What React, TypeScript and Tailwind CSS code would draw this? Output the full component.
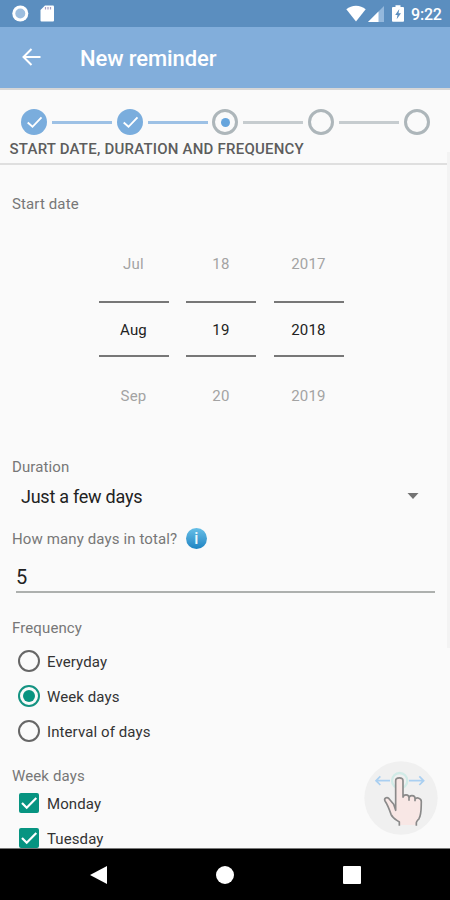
import type { ReactNode } from "react";

function StatusBar() {
  return (
    <div className="flex h-[27px] items-center bg-[#5b8ebf] pl-3 pr-2 text-white">
      <svg width="17" height="17" viewBox="0 0 17 17">
        <circle cx="8.3" cy="8.5" r="8" fill="#fff" />
        <circle cx="8.3" cy="8.5" r="5" fill="#9dbedf" />
      </svg>
      <svg width="14" height="17" viewBox="0 0 14 17" className="ml-[10.5px]">
        <path d="M5 .5h8q1 0 1 1v14q0 1-1 1H1.500q-1 0-1-1V5z" fill="#fff" />
        <path d="M5.500 2v2.500M8 2v2.500M10.500 2v2.500" stroke="#a79fc4" strokeWidth="1.200" />
      </svg>
      <svg width="20" height="17" viewBox="0 0 20 17" className="ml-auto">
        <path d="M.3 4.300Q4.500.8 10 .8t9.700 3.500L10 16.500z" fill="#fff" />
      </svg>
      <svg width="16" height="16" viewBox="0 0 16 16" className="ml-0.5">
        <path d="M0 16L16 0v16z" fill="#94b8dc" />
        <path d="M0 16L10.500 5.500V16z" fill="#fff" />
      </svg>
      <svg width="12" height="17" viewBox="0 0 12 17" className="ml-[8.500px]">
        <path d="M3.500.3h5v1.700H11q1 0 1 1v13q0 .8-1 .8H1q-1 0-1-.8V3q0-1 1-1h2.500z" fill="#fff" />
        <path d="M7.300 4L3.200 10h2.300l-.8 4.200L9 8.300H6.500z" fill="#5b8ebf" />
      </svg>
      <span className="ml-[7px] w-[31px] whitespace-nowrap pt-0.5 text-[16px] font-medium leading-none tracking-[-0.2px]">9:22</span>
    </div>
  );
}

function Stepper() {
  const steps = ["done", "done", "current", "todo", "todo"];
  return (
    <div className="flex h-[26px] items-center gap-[4.800px] pl-[21.200px]">
      {steps.map((state, i) => (
        <div key={i} className="flex items-center gap-[4.800px]">
          {state === "done" ? (
            <div className="size-[26px] rounded-full bg-[#7aaddd]">
              <svg viewBox="0 0 26 26" className="size-[26px]" fill="none" stroke="#fff">
                <path d="M6.700 13.500l4.800 4.300L20.500 8.300" strokeWidth="1.900" />
              </svg>
            </div>
          ) : (
            <div className="flex size-[26px] items-center justify-center rounded-full border-[3.500px] border-[#adb6ba]">
              {state === "current" && <div className="size-[9px] rounded-full bg-[#66a5dd]" />}
            </div>
          )}
          {i < 4 && <div className={`h-[3px] w-[60px] ${i < 2 ? "bg-[#9dc1e5]" : "bg-[#c6cccf]"}`} />}
        </div>
      ))}
    </div>
  );
}

function Column({ values }: { values: string[] }) {
  return (
    <div className="flex w-[70px] flex-col items-center text-[15px] tracking-[0.2px]">
      <div className="flex h-[73px] w-full items-start justify-center leading-[20px] text-[#a3a3a3]">
        <span className="pt-[26px]">{values[0]}</span>
      </div>
      <div className="flex h-[56px] w-full items-center justify-center border-y-2 border-[#777] pt-[3px] text-[#222]">{values[1]}</div>
      <div className="pt-[29px] leading-[20px] text-[#a3a3a3]">{values[2]}</div>
    </div>
  );
}

function Label({ children }: { children: ReactNode }) {
  return <div className="flex h-5 items-center pl-3 text-[15px] tracking-[0.12px] text-[#777]">{children}</div>;
}

function Radio({ label, on }: { label: string; on?: boolean }) {
  return (
    <div className="flex h-[35px] items-center pl-[18px] text-[15px] text-[#333]">
      <div className={`mb-px flex size-[22px] items-center justify-center rounded-full border-2 ${on ? "border-[#149382]" : "border-[#666]"}`}>
        {on && <div className="size-3 rounded-full bg-[#089380]" />}
      </div>
      <span className="ml-[7px] pt-px tracking-[0.1px]">{label}</span>
    </div>
  );
}

function Checkbox({ label }: { label: string }) {
  return (
    <div className="flex h-[35px] items-center pl-[19px] text-[15px] text-[#333]">
      <div className="mb-px size-5 rounded-[2px] bg-[#079481]">
        <svg viewBox="0 0 20 20" fill="none" stroke="#fff" strokeWidth="2.200">
          <path d="M3 10l4.700 4.700L17.300 5" />
        </svg>
      </div>
      <span className="ml-2 pt-px tracking-[0.1px]">{label}</span>
    </div>
  );
}

function SwipeHint() {
  return (
    <svg viewBox="71 32 222 222" className="absolute left-[363.500px] top-[760.500px] size-[74px]" fill="none">
      <circle cx="182" cy="143" r="110" fill="#f0f0f0" />
      <circle cx="178" cy="91" r="23" stroke="#d1ebe7" strokeWidth="7" />
      <g stroke="#a9cff1" strokeWidth="5">
        <path d="M149 91H108M120 78L107 91l13 13M206 91h43M237 78l13 13-13 13" />
      </g>
      <path
        d="M177 224v-9c-10-7-20-11-25-23-5-15-9-27-18-40-4-8 5-14 12-7l20 25V91c0-11 22-11 22 0v49c1-9 17-9 18 1 3-9 18-7 18 3 5-7 19-3 19 7-1 22 0 41-8 55l-7 10v8z"
        fill="#f8e7e5"
      />
      <path
        d="M177 226v-11c-10-7-20-11-25-23-5-15-9-27-18-40-4-8 5-14 12-7l14 17 6 18V91c0-11 22-11 22 0v50M188 142c0-11 18-11 18 0v9M206 143c1-10 18-9 18 1v9M224 147c5-8 19-3 19 7-1 20 1 37-7 51-3 4-8 8-8 12v9"
        stroke="#8a8a8a"
        strokeWidth="5"
        strokeLinejoin="round"
      />
    </svg>
  );
}

export default function App() {
  return (
    <div className="relative flex h-[900px] w-[450px] flex-col overflow-hidden bg-[#fafafa] font-[Roboto,sans-serif]">
      <StatusBar />
      <header className="flex h-[61px] items-center bg-[#82aedb] pl-[22px] text-white">
        <svg width="19" height="18" viewBox="0 0 19 18" fill="none" stroke="#fff" strokeWidth="2" className="mb-px">
          <path d="M18.500 9H2M9.500 1L1.500 9l8 8" />
        </svg>
        <h1 className="ml-[39px] pt-px text-[22px] font-medium tracking-[-0.1px]">New reminder</h1>
      </header>
      <div className="h-[77px] border-b-2 border-t-2 border-b-[#dfdfdf] border-t-[#d7d7d7] pt-[19px]">
        <Stepper />
        <div className="flex h-[28px] items-center pl-[9.500px] text-[15px] font-medium tracking-[0.22px] text-[#5d5d5d]">
          START DATE, DURATION AND FREQUENCY
        </div>
      </div>
      <main className="flex min-h-0 flex-1 flex-col overflow-hidden pt-[29px] *:shrink-0">
        <Label>Start date</Label>
        <div className="flex h-[243px] gap-[17.500px] pl-[98.500px] pt-[14px]">
          <Column values={["Jul", "Aug", "Sep"]} />
          <Column values={["18", "19", "20"]} />
          <Column values={["2017", "2018", "2019"]} />
        </div>
        <Label>Duration</Label>
        <div className="flex h-[39px] items-center justify-between pl-[21px] pr-[31px] text-[18px] tracking-[-0.250px] text-[#222]">
          <span>Just a few days</span>
          <svg width="12" height="6" viewBox="0 0 12 6" className="mb-0.5">
            <path d="M.5 0h11L6 6z" fill="#737373" />
          </svg>
        </div>
        <div className="mt-[12px] flex h-[22px] items-center">
          <Label>How many days in total?</Label>
          <div className="mb-px ml-[8.500px] flex size-[21px] items-center justify-center rounded-full bg-linear-to-b from-[#66bfe7] to-[#1b84c2] text-[16px] font-medium leading-none text-[#eef8fd]">i</div>
        </div>
        <div className="ml-4 mr-[15px] mt-[11px] flex h-[32px] items-center border-b-2 border-[#adb0ae] pt-px text-[20px] text-[#222]">5</div>
        <div className="mt-[25px]">
          <Label>Frequency</Label>
        </div>
        <div className="mt-[6px]">
          <Radio label="Everyday" />
          <Radio label="Week days" on />
          <Radio label="Interval of days" />
        </div>
        <div className="mt-[17px]">
          <Label>Week days</Label>
        </div>
        <Checkbox label="Monday" />
        <Checkbox label="Tuesday" />
      </main>
      <nav className="flex h-[52px] shrink-0 items-center border-t border-[#777] bg-black pl-[90px]">
        <svg width="17" height="18" viewBox="0 0 17 18">
          <path d="M17 0v18L0 9z" fill="#fff" />
        </svg>
        <div className="ml-[109px] size-[18px] rounded-full bg-white" />
        <div className="ml-[109px] size-[18px] rounded-[1px] bg-white" />
      </nav>
      <SwipeHint />
      <div className="absolute right-0 top-[152px] h-[496px] w-[3px] bg-[#f3f3f3]" />
    </div>
  );
}
